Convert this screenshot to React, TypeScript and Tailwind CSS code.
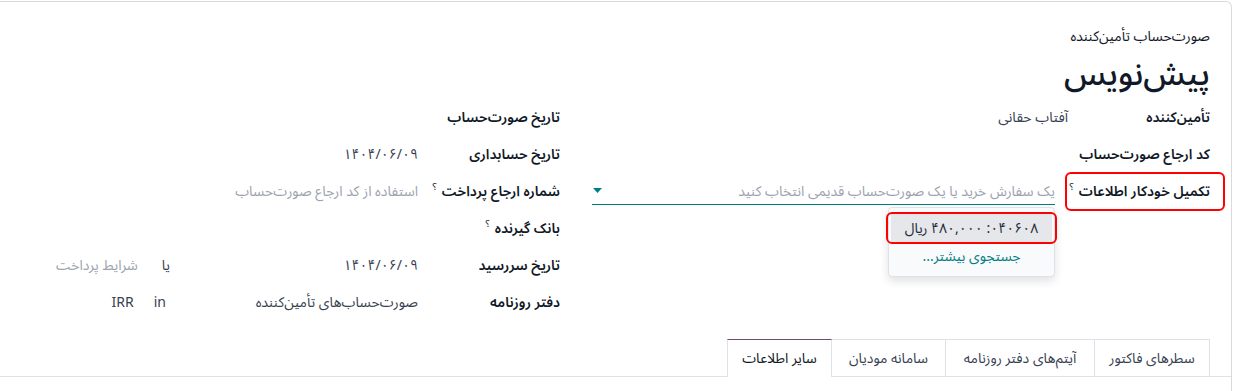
import React from 'react';

const font = 'font-["Noto_Sans_Arabic","DejaVu_Sans",sans-serif]';

function Label({ children, help }: { children: React.ReactNode; help?: boolean }) {
  return (
    <div className="w-[142px] shrink-0 flex items-center text-[14px] font-semibold text-[#111827]">
      <span>{children}</span>
      {help && <span className="relative -top-[5px] mr-[5px] text-[10px] leading-[10px] font-normal">؟</span>}
    </div>
  );
}

function Row({ children }: { children: React.ReactNode }) {
  return <div className="flex h-[37px] items-center">{children}</div>;
}

const tabs = [
  { label: 'سطرهای فاکتور', w: 'w-[116px]' },
  { label: 'آیتم‌های دفتر روزنامه', w: 'w-[150px]' },
  { label: 'سامانه مودیان', w: 'w-[115px]' },
  { label: 'سایر اطلاعات', w: 'w-[105px]', active: true },
];

export default function App() {
  return (
    <div dir="rtl" className={`w-[1236px] h-[391px] overflow-hidden bg-white ${font}`}>
      <div className="mt-[1px] mr-[4px] h-[400px] border-t border-r border-[#d8dadd] rounded-tr-[6px] pr-[21px] pt-[24px]">
        <div className="text-[14px] leading-[22px] text-[#111827]">صورت‌حساب تأمین‌کننده</div>
        <h1 className="mt-[8px] text-[33px] leading-[38px] font-medium text-[#111827]">پیش‌نویس</h1>

        <div className="mt-[5px] flex gap-[32px]">
          {/* right group */}
          <div className="w-[618px] shrink-0">
            <Row>
              <Label>تأمین‌کننده</Label>
              <div className="text-[14px] text-[#374151]">آفتاب حقانی</div>
            </Row>
            <Row>
              <Label>کد ارجاع صورت‌حساب</Label>
            </Row>
            <Row>
              <div className="relative">
                <Label help>تکمیل خودکار اطلاعات</Label>
                <span className="absolute -top-[9px] -bottom-[9px] -right-[15px] -left-[3px] rounded-[6px] border-2 border-[#ff0000]" />
              </div>
              <div className="relative mr-[13px] flex-1">
                <div className="flex h-[27px] items-center justify-between border-b border-[#017e84]">
                  <span className="text-[14px] text-[#9ca3af]">یک سفارش خرید یا یک صورت‌حساب قدیمی انتخاب کنید</span>
                  <svg width="9" height="6" viewBox="0 0 9 6" className="ml-[1px]">
                    <path d="M0 0h9L4.5 5z" fill="#017e84" />
                  </svg>
                </div>
                <div className="absolute right-0 top-[29px] w-[167px] rounded-[4px] border border-[#dee2e6] bg-[#f9fafb] py-[6px] shadow-[0_4px_10px_rgba(0,0,0,0.12)]">
                  <div className="relative mx-[2px] flex h-[28px] items-center justify-center bg-[#e5e7eb] text-[14px] text-[#1f2937]">
                    ۰۴۰۶۰۸: ۴۸۰,۰۰۰ ریال
                    <span className="absolute -top-[2px] -bottom-[2px] -right-[5px] -left-[5px] rounded-[6px] border-2 border-[#ff0000]" />
                  </div>
                  <div className="flex h-[28px] items-center justify-center text-[14px] text-[#017e84]">جستجوی بیشتر...</div>
                </div>
              </div>
            </Row>
          </div>

          {/* left group */}
          <div className="w-[536px] shrink-0">
            <Row>
              <Label>تاریخ صورت‌حساب</Label>
            </Row>
            <Row>
              <Label>تاریخ حسابداری</Label>
              <div className="text-[14px] text-[#374151]">۱۴۰۴/۰۶/۰۹</div>
            </Row>
            <Row>
              <Label help>شماره ارجاع پرداخت</Label>
              <div className="text-[14px] text-[#9ca3af]">استفاده از کد ارجاع صورت‌حساب</div>
            </Row>
            <Row>
              <Label help>بانک گیرنده</Label>
            </Row>
            <Row>
              <Label>تاریخ سررسید</Label>
              <div className="w-[248px] shrink-0 text-[14px] text-[#374151]">۱۴۰۴/۰۶/۰۹</div>
              <div className="pl-[24px] text-[14px] text-[#374151]">یا</div>
              <div className="text-[14px] text-[#9ca3af]">شرایط پرداخت</div>
            </Row>
            <Row>
              <Label>دفتر روزنامه</Label>
              <div className="w-[252px] shrink-0 text-[14px] text-[#374151]">صورت‌حساب‌های تأمین‌کننده</div>
              <div className="pl-[20px] text-[14px] text-[#374151]">in</div>
              <div className="text-[14px] text-[#374151]">IRR</div>
            </Row>
          </div>
        </div>

        <div className="mt-[18px] -ml-[4px] -mr-[21px] border-b border-[#dee2e6] pr-[21px]">
          <ul className="flex -mb-px">
            {tabs.map((t) =>
              t.active ? (
                <li
                  key={t.label}
                  className={`${t.w} flex h-[38px] items-center justify-center border-x border-t border-[#dee2e6] border-t-[#714b67] bg-white text-[14px] text-[#111827] -mr-px`}
                >
                  {t.label}
                </li>
              ) : (
                <li
                  key={t.label}
                  className={`${t.w} flex h-[38px] items-center justify-center border-x border-t border-b border-[#dee2e6] text-[14px] text-[#374151] -mr-px first:mr-0`}
                >
                  {t.label}
                </li>
              )
            )}
          </ul>
        </div>
      </div>
    </div>
  );
}
